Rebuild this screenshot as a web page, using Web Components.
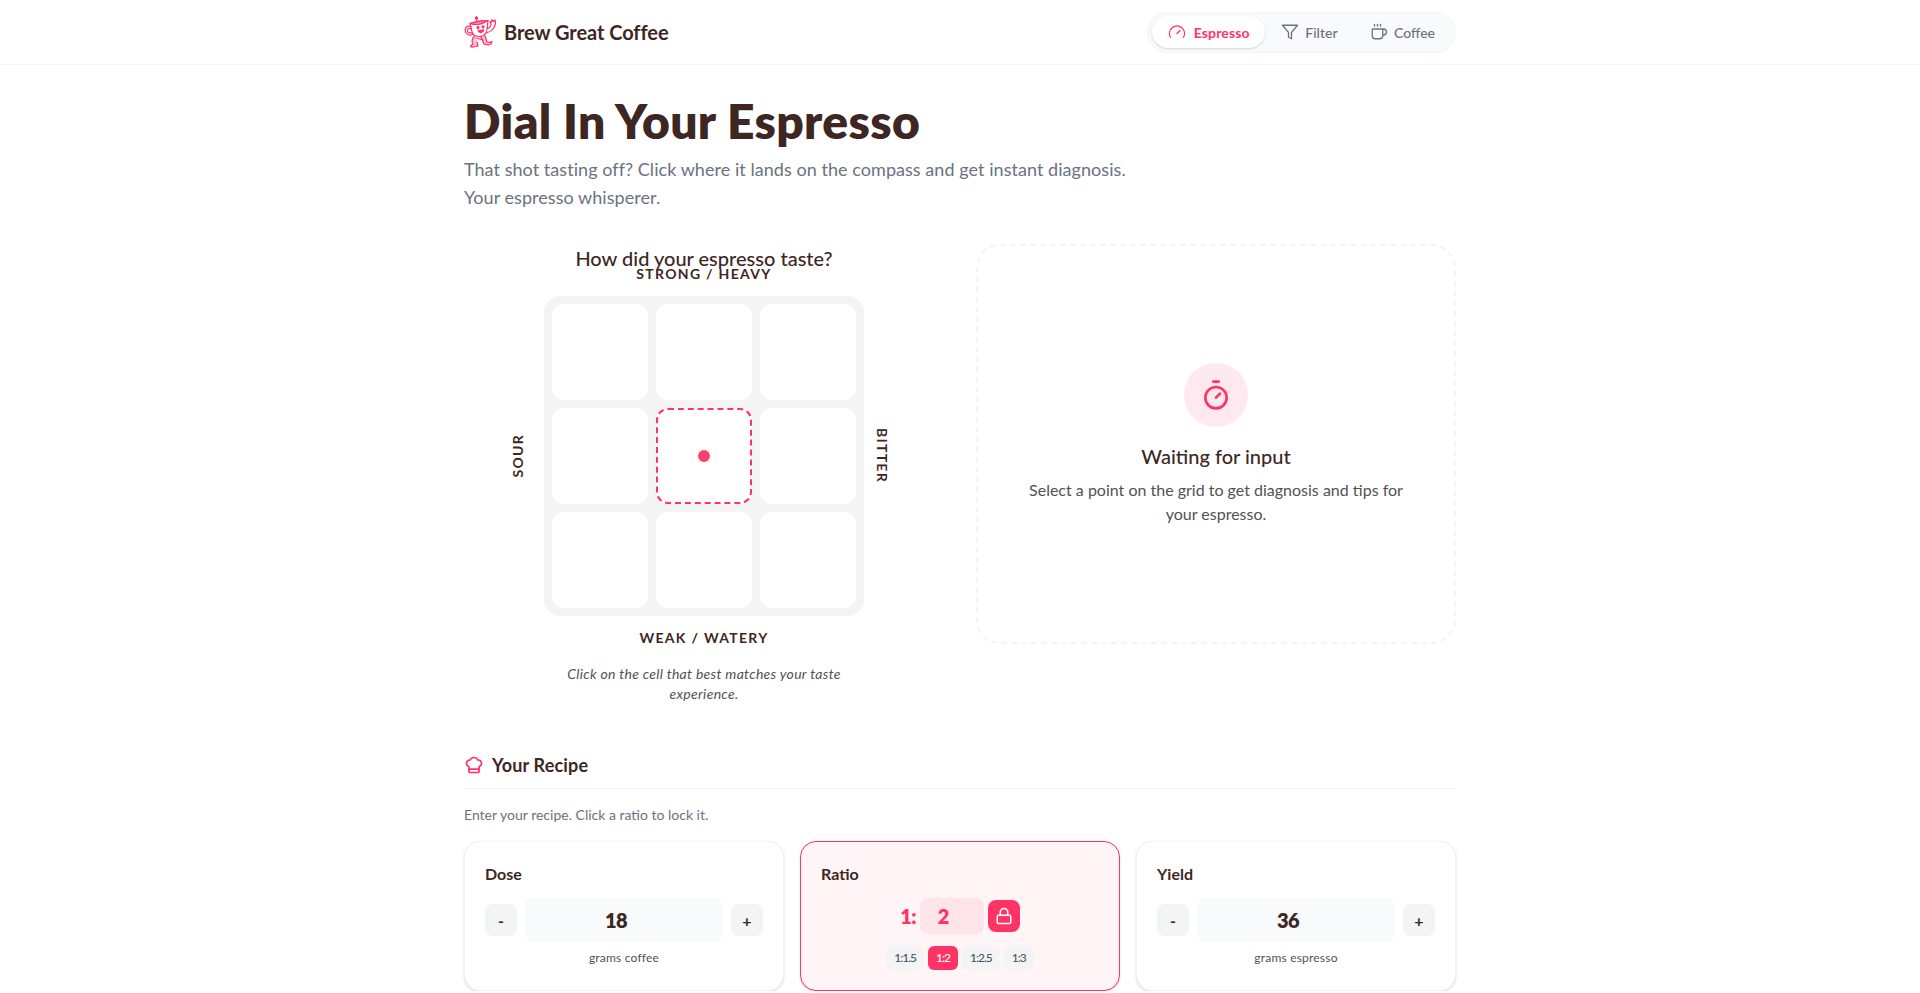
<!DOCTYPE html>
<html lang="en">
<head>
<meta charset="utf-8">
<title>Brew Great Coffee</title>
<style>
  html, body { margin: 0; padding: 0; background: #fff; }
  body { font-family: Lato, "Noto Sans", sans-serif; color: #3e2723; overflow-x: hidden; }
</style>
</head>
<body>
<bgc-header></bgc-header>
<bgc-page>
  <bgc-hero slot="hero" title="Dial In Your Espresso">
    That shot tasting off? Click where it lands on the compass and get instant diagnosis.<br>Your espresso whisperer.
  </bgc-hero>
  <bgc-compass slot="compass"></bgc-compass>
  <bgc-waiting slot="waiting"></bgc-waiting>
  <bgc-recipe slot="recipe">
    <bgc-stepper label="Dose" value="18" unit="grams coffee"></bgc-stepper>
    <bgc-ratio></bgc-ratio>
    <bgc-stepper label="Yield" value="36" unit="grams espresso"></bgc-stepper>
  </bgc-recipe>
</bgc-page>

<script>
const ICONS = {
  gauge: '<path d="m12 14 4-4"/><path d="M3.34 19a10 10 0 1 1 17.32 0"/>',
  filter: '<polygon points="22 3 2 3 10 12.46 10 19 14 21 14 12.46 22 3"/>',
  coffee: '<path d="M10 2v2"/><path d="M14 2v2"/><path d="M16 8a1 1 0 0 1 1 1v8a4 4 0 0 1-4 4H7a4 4 0 0 1-4-4V9a1 1 0 0 1 1-1h14a4 4 0 1 1 0 8h-1"/><path d="M6 2v2"/>',
  timer: '<line x1="10" x2="14" y1="2" y2="2"/><line x1="12" x2="15" y1="14" y2="11"/><circle cx="12" cy="14" r="8"/>',
  chef: '<path d="M17 21a1 1 0 0 0 1-1v-5.35c0-.457.316-.844.727-1.041a4 4 0 0 0-2.134-7.589 5 5 0 0 0-9.186 0 4 4 0 0 0-2.134 7.588c.411.198.727.585.727 1.041V20a1 1 0 0 0 1 1Z"/><path d="M6 17h12"/>',
  lock: '<rect width="18" height="11" x="3" y="11" rx="2" ry="2"/><path d="M7 11V7a5 5 0 0 1 10 0v4"/>',
};

function icon(name, size, width = 2) {
  return `<svg width="${size}" height="${size}" viewBox="0 0 24 24" fill="none" stroke="currentColor" stroke-width="${width}" stroke-linecap="round" stroke-linejoin="round">${ICONS[name]}</svg>`;
}

const MASCOT = `
<svg width="33" height="32" viewBox="0 0 33 32" fill="none" stroke="#ff3366" stroke-width="1.25" stroke-linecap="round" stroke-linejoin="round">
  <path d="M6 7.5 C11 5.5 18 4.5 24 4.5 L23 15 C22 19 18 21 14 20.5 C10 20 8 17 7.5 14 Z" fill="#fff"/>
  <path d="M6 7.5 C11 9.5 18 8.5 24 4.5 C18 4.5 11 5.5 6 7.5 Z" fill="#ff8fab"/>
  <path d="M13 4.8 L12.6 2.6"/><circle cx="12.4" cy="1.9" r="1.1" fill="#ff3366"/>
  <path d="M7 10.5 C3 9 .8 12 1.2 15 C1.6 18 5 20 9 18.5"/>
  <path d="M7.4 12.5 C4.8 11.8 3.2 13 3.4 15 C3.6 16.6 5.4 17.4 8 16.6"/>
  <path d="M23 13 C25 12.5 26.5 11 27 8.5 L26 5.5 L27.5 6 L28 3.5 L29.5 5.5 L31 4 L31.5 6.5 C31.5 10 29 15 23.5 16.5" fill="#fff"/>
  <circle cx="14" cy="11.5" r="1" fill="#ff3366"/><circle cx="19" cy="10.8" r="1" fill="#ff3366"/>
  <path d="M14 14.5 C15.5 17.5 19 17 19.8 13.8 Z" fill="#ff3366"/>
  <path d="M10.5 20 C8 23 7.5 26 9 28 L7 29.5 C6 30.5 7 31.3 9 31 L14 30 L13 26" fill="#ffc2d1"/>
  <path d="M17 21 C18 24 19.5 26 20 28 L24 29 C26 29 28 27.5 28 25.5 C26.5 26.5 25 26.5 23 26 L21 20" fill="#ffc2d1"/>
  <path d="M12 22 L19 24"/>
</svg>`;

const TOKENS = `
  :host, *, *::before, *::after { box-sizing: border-box; }
  svg { display: block; flex: none; }
`;

class BaseElement extends HTMLElement {
  constructor() {
    super();
    this.attachShadow({ mode: 'open' });
  }
  render(html) {
    this.shadowRoot.innerHTML = `<style>${TOKENS}${this.constructor.styles}</style>${html}`;
  }
}

class BgcHeader extends BaseElement {
  static styles = `
    :host { display: block; height: 65px; border-bottom: 1px solid #f3f4f6; background: #fff; }
    .inner { width: 1024px; height: 64px; margin: 0 auto; padding: 0 16px; display: flex; align-items: center; justify-content: space-between; }
    .brand { display: flex; align-items: center; gap: 7px; font-size: 20px; font-weight: 700; color: #3e2723; letter-spacing: -.05px; }
    nav { display: flex; align-items: center; gap: .5px; height: 41px; padding: 0 4px; border: 1px solid #f3f4f6; border-radius: 999px; background: #f9fafb; }
    a { display: flex; align-items: center; gap: 6px; height: 32px; padding: 0 16px; border-radius: 999px; font-size: 14px; font-weight: 500; color: #6b7280; }
    a.on { gap: 8px; padding-right: 15px; letter-spacing: .15px; font-weight: 700; background: #fff; color: #ff3366; box-shadow: 0 1px 3px rgba(0,0,0,.1), 0 1px 2px rgba(0,0,0,.06); }
  `;
  connectedCallback() {
    this.render(`
      <div class="inner">
        <div class="brand">${MASCOT}<span>Brew Great Coffee</span></div>
        <nav>
          <a class="on">${icon('gauge', 18, 1.75)}Espresso</a>
          <a>${icon('filter', 18, 1.75)}Filter</a>
          <a>${icon('coffee', 18, 1.75)}Coffee</a>
        </nav>
      </div>`);
  }
}

class BgcPage extends BaseElement {
  static styles = `
    :host { display: block; width: 1024px; margin: 0 auto; padding: 32px 16px 0; }
    .top { margin-top: 33px; display: grid; grid-template-columns: 480px 480px; gap: 32px; align-items: start; }
    .recipe { margin-top: 47px; }
  `;
  connectedCallback() {
    this.render(`
      <slot name="hero"></slot>
      <div class="top"><slot name="compass"></slot><slot name="waiting"></slot></div>
      <div class="recipe"><slot name="recipe"></slot></div>`);
  }
}

class BgcHero extends BaseElement {
  static styles = `
    :host { display: block; }
    h1 { margin: 0 0 10px; font-size: 48px; line-height: 48px; font-weight: 800; letter-spacing: .33px; color: #3e2723; }
    p { margin: 0; font-size: 18px; line-height: 28px; letter-spacing: .05px; color: #6b7280; }
  `;
  connectedCallback() {
    this.render(`<h1>${this.getAttribute('title')}</h1><p><slot></slot></p>`);
  }
}

class BgcCompass extends BaseElement {
  static styles = `
    :host { display: block; text-align: center; }
    h2 { margin: 0 0 -8px; font-size: 20px; line-height: 28px; font-weight: 500; color: #3e2723; }
    .axis { font-size: 14px; line-height: 20px; font-weight: 700; letter-spacing: 1.3px; color: #3e2723; text-transform: uppercase; }
    .top { margin-bottom: 12px; }
    .bottom { margin-top: 12px; }
    .row { display: grid; grid-template-columns: 1fr 320px 1fr; align-items: center; }
    .sour { writing-mode: vertical-rl; transform: rotate(180deg); justify-self: end; margin-right: 16px; }
    .bitter { writing-mode: vertical-rl; justify-self: start; margin-left: 8px; }
    .board { display: grid; grid-template-columns: repeat(3, 96px); grid-auto-rows: 96px; gap: 8px; padding: 8px; border-radius: 16px; background: #f4f4f5; }
    .cell { background: #fff; border-radius: 12px; display: flex; align-items: center; justify-content: center; }
    .cell.on { border: 2px dashed #ff3366; }
    .dot { width: 12px; height: 12px; border-radius: 50%; background: #ff406f; }
    p { width: 320px; margin: 16px auto 0; font-size: 14px; line-height: 20px; font-style: italic; letter-spacing: .3px; color: #525252; }
  `;
  connectedCallback() {
    const cells = Array.from({ length: 9 }, (_, i) =>
      i === 4 ? '<div class="cell on"><div class="dot"></div></div>' : '<div class="cell"></div>').join('');
    this.render(`
      <h2>How did your espresso taste?</h2>
      <div class="axis top">Strong / Heavy</div>
      <div class="row">
        <div class="axis sour">Sour</div>
        <div class="board">${cells}</div>
        <div class="axis bitter">Bitter</div>
      </div>
      <div class="axis bottom">Weak / Watery</div>
      <p>Click on the cell that best matches your taste experience.</p>`);
  }
}

class BgcWaiting extends BaseElement {
  static styles = `
    :host { display: flex; flex-direction: column; align-items: center; justify-content: center; height: 400px; padding: 24px; border: 2px dashed #f3f4f6; border-radius: 24px; text-align: center; }
    .badge { width: 64px; height: 64px; border-radius: 50%; background: #ffe9ef; color: #ff3366; display: flex; align-items: center; justify-content: center; margin-bottom: 15px; }
    h3 { margin: 0 0 8px; font-size: 20px; line-height: 28px; font-weight: 500; color: #3e2723; }
    p { margin: 0; max-width: 384px; font-size: 16px; line-height: 24px; color: #525252; }
  `;
  connectedCallback() {
    this.render(`
      <div class="badge">${icon('timer', 32)}</div>
      <h3>Waiting for input</h3>
      <p>Select a point on the grid to get diagnosis and tips for your espresso.</p>`);
  }
}

class BgcRecipe extends BaseElement {
  static styles = `
    :host { display: block; }
    header { display: flex; align-items: center; gap: 8px; padding-bottom: 9px; border-bottom: 1px solid #f3f4f6; font-size: 18px; line-height: 28px; font-weight: 700; letter-spacing: .15px; color: #3e2723; }
    header span { color: #ff3366; }
    p { margin: 16px 0 16px; font-size: 14px; line-height: 20px; color: #6b7280; }
    .cards { display: grid; grid-template-columns: repeat(3, 1fr); gap: 16px; }
  `;
  connectedCallback() {
    this.render(`
      <header><span>${icon('chef', 20)}</span>Your Recipe</header>
      <p>Enter your recipe. Click a ratio to lock it.</p>
      <div class="cards"><slot></slot></div>`);
  }
}

const CARD = `
  :host { display: block; padding: 20px; border: 1px solid #f3f4f6; border-radius: 16px; background: #fff; box-shadow: 0 1px 3px rgba(0,0,0,.1), 0 1px 2px rgba(0,0,0,.06); }
  h4 { margin: 0 0 12px; font-size: 16px; line-height: 24px; font-weight: 700; color: #3e2723; }
`;

class BgcStepper extends BaseElement {
  static styles = `${CARD}
    .row { display: flex; align-items: center; gap: 8px; }
    button { width: 32px; height: 32px; padding: 0; border: 0; border-radius: 8px; background: #f3f4f6; font: 700 16px Lato, sans-serif; color: #3e2723; }
    .value { flex: 1; height: 44px; padding-right: 16px; border-radius: 8px; background: #f9fafb; display: flex; align-items: center; justify-content: center; font-size: 20px; font-weight: 800; letter-spacing: -.5px; color: #3e2723; }
    small { display: block; margin-top: 8px; font-size: 12px; line-height: 16px; letter-spacing: .2px; text-align: center; color: #525252; }
  `;
  connectedCallback() {
    this.render(`
      <h4>${this.getAttribute('label')}</h4>
      <div class="row">
        <button>-</button>
        <div class="value">${this.getAttribute('value')}</div>
        <button>+</button>
      </div>
      <small>${this.getAttribute('unit')}</small>`);
  }
}

class BgcRatio extends BaseElement {
  static styles = `${CARD}
    :host { border-color: #ff3366; background: #fff5f7; }
    .row { display: flex; align-items: center; justify-content: center; gap: 4px; font-size: 20px; font-weight: 800; color: #ff3366; }
    .row > span { letter-spacing: -.8px; }
    .value { width: 64px; height: 36px; padding-left: 18px; border-radius: 8px; background: #ffe4e9; display: flex; align-items: center; }
    button { width: 32px; height: 32px; padding: 0; border: 0; border-radius: 8px; background: #ff3366; color: #fff; display: flex; align-items: center; justify-content: center; }
    .presets { display: flex; justify-content: center; gap: 4px; margin-top: 12px; }
    .presets span { height: 24px; padding: 0 8px; border-radius: 6px; background: #f3f4f6; font-size: 12px; line-height: 24px; font-weight: 500; letter-spacing: -1px; color: #4b5563; }
    .presets span.on { background: #ff3366; color: #fff; }
  `;
  connectedCallback() {
    this.render(`
      <h4>Ratio</h4>
      <div class="row">
        <span>1:</span>
        <div class="value">2</div>
        <button>${icon('lock', 18)}</button>
      </div>
      <div class="presets"><span>1:1.5</span><span class="on">1:2</span><span>1:2.5</span><span>1:3</span></div>`);
  }
}

customElements.define('bgc-header', BgcHeader);
customElements.define('bgc-page', BgcPage);
customElements.define('bgc-hero', BgcHero);
customElements.define('bgc-compass', BgcCompass);
customElements.define('bgc-waiting', BgcWaiting);
customElements.define('bgc-recipe', BgcRecipe);
customElements.define('bgc-stepper', BgcStepper);
customElements.define('bgc-ratio', BgcRatio);
</script>
</body>
</html>
